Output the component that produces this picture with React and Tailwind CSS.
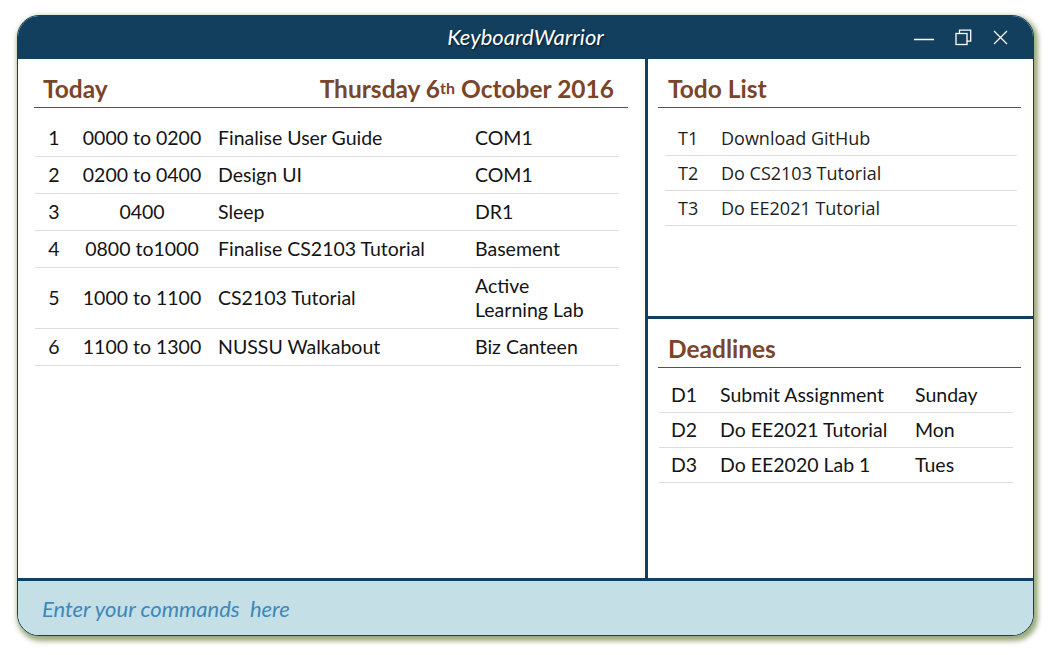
const events = [
  { id: "1", time: "0000 to 0200", title: "Finalise User Guide", place: "COM1" },
  { id: "2", time: "0200 to 0400", title: "Design UI", place: "COM1" },
  { id: "3", time: "0400", title: "Sleep", place: "DR1" },
  { id: "4", time: "0800 to1000", title: "Finalise CS2103 Tutorial", place: "Basement" },
  { id: "5", time: "1000 to 1100", title: "CS2103 Tutorial", place: "Active\nLearning Lab" },
  { id: "6", time: "1100 to 1300", title: "NUSSU Walkabout", place: "Biz Canteen" },
];

const todos = [
  { id: "T1", title: "Download GitHub" },
  { id: "T2", title: "Do CS2103 Tutorial" },
  { id: "T3", title: "Do EE2021 Tutorial" },
];

const deadlines = [
  { id: "D1", title: "Submit Assignment", due: "Sunday" },
  { id: "D2", title: "Do EE2021 Tutorial", due: "Mon" },
  { id: "D3", title: "Do EE2020 Lab 1", due: "Tues" },
];

const gill = { fontFamily: "Lato, 'Open Sans', sans-serif" };

const Heading = ({ children, className }) => (
  <div
    className={`flex items-end justify-between border-b border-[#7a4529] text-[24.5px] font-bold leading-[30px] text-[#7a4529] ${className}`}
  >
    {children}
  </div>
);

export default function App() {
  return (
    <div className="min-h-screen bg-white pt-[15px] pl-[17px]" style={gill}>
      <div className="flex h-[621px] w-[1017px] flex-col overflow-hidden rounded-[22px] border border-[#123f5e] bg-white shadow-[2px_3px_5px_2px_rgba(120,140,80,0.75)]">
        {/* title bar */}
        <div className="grid h-[43px] shrink-0 grid-cols-[1fr_auto_1fr] items-center bg-[#123f5e]">
          <div />
          <div className="-mt-[3px] text-[22px] italic text-white [text-shadow:1px_1px_2px_rgba(0,0,0,0.6)]">
            KeyboardWarrior
          </div>
          <div className="flex items-center justify-end gap-[21px] pr-[25px] text-white">
            <svg width="20" height="14" viewBox="0 0 20 14">
              <line x1="0" y1="8.5" x2="20" y2="8.5" stroke="white" strokeWidth="1.3" />
            </svg>
            <svg width="17" height="17" viewBox="0 0 17 17" fill="none" stroke="white" strokeWidth="1.3">
              <rect x="1" y="4.5" width="11" height="11" />
              <path d="M4.5 4.5V1.2H15.7V12.2H12" />
            </svg>
            <svg width="15" height="15" viewBox="0 0 15 15" stroke="white" strokeWidth="1.3">
              <line x1="1" y1="1" x2="14" y2="14" />
              <line x1="14" y1="1" x2="1" y2="14" />
            </svg>
          </div>
        </div>

        {/* main */}
        <div className="flex min-h-0 flex-1">
          {/* today */}
          <div className="w-[627px] shrink-0 pt-[15px]">
            <Heading className="ml-[16px] mr-[17px] px-[9px] pb-[3px]">
              <span>Today</span>
              <span className="pr-[5px]">
                Thursday 6<sup className="relative -top-[4px] text-[16px] font-bold">th</sup> October 2016
              </span>
            </Heading>
            <div className="ml-[17px] mr-[26px] mt-[12px] text-[19.5px] text-[#141414]">
              {events.map((e) => (
                <div key={e.id} className="flex items-center border-b border-[#dedede] py-[6px] leading-[24px]">
                  <div className="w-[38px] text-center">{e.id}</div>
                  <div className="w-[138px] whitespace-pre text-center">{e.time}</div>
                  <div className="w-[264px] whitespace-pre pl-[7px]">{e.title}</div>
                  <div className="whitespace-pre-line">{e.place}</div>
                </div>
              ))}
            </div>
          </div>

          <div className="w-[3px] shrink-0 bg-[#123f5e]" />

          {/* right column */}
          <div className="flex flex-1 flex-col">
            <div className="h-[257px] shrink-0 pt-[15px]">
              <Heading className="ml-[10px] mr-[12px] px-[10px] pb-[3px]">
                <span>Todo List</span>
              </Heading>
              <div
                className="ml-[17px] mr-[16px] mt-[13px] text-[18px] text-[#1e1e1e]"
                style={{ fontFamily: "'Open Sans', 'Noto Sans', sans-serif" }}
              >
                {todos.map((t) => (
                  <div key={t.id} className="flex items-center border-b border-[#dedede] py-[5px] leading-[24px]">
                    <div className="w-[56px] pl-[13px]">{t.id}</div>
                    <div>{t.title}</div>
                  </div>
                ))}
              </div>
            </div>

            <div className="h-[3px] shrink-0 bg-[#123f5e]" />

            <div className="flex-1 pt-[15px]">
              <Heading className="ml-[10px] mr-[12px] px-[10px] pb-[3px]">
                <span>Deadlines</span>
              </Heading>
              <div className="ml-[11px] mr-[20px] mt-[10px] text-[19.5px] text-[#141414]">
                {deadlines.map((d) => (
                  <div key={d.id} className="flex items-center border-b border-[#dedede] py-[5px] leading-[24px]">
                    <div className="w-[61px] pl-[12px]">{d.id}</div>
                    <div className="w-[195px] whitespace-pre">{d.title}</div>
                    <div>{d.due}</div>
                  </div>
                ))}
              </div>
            </div>
          </div>
        </div>

        <div className="h-[3px] shrink-0 bg-[#123f5e]" />

        {/* command box */}
        <div className="flex h-[54px] shrink-0 items-center bg-[#c4dfe6] pl-[24px]">
          <span className="whitespace-pre text-[22px] italic text-[#3d88b9]">Enter your commands  here</span>
        </div>
      </div>
    </div>
  );
}
